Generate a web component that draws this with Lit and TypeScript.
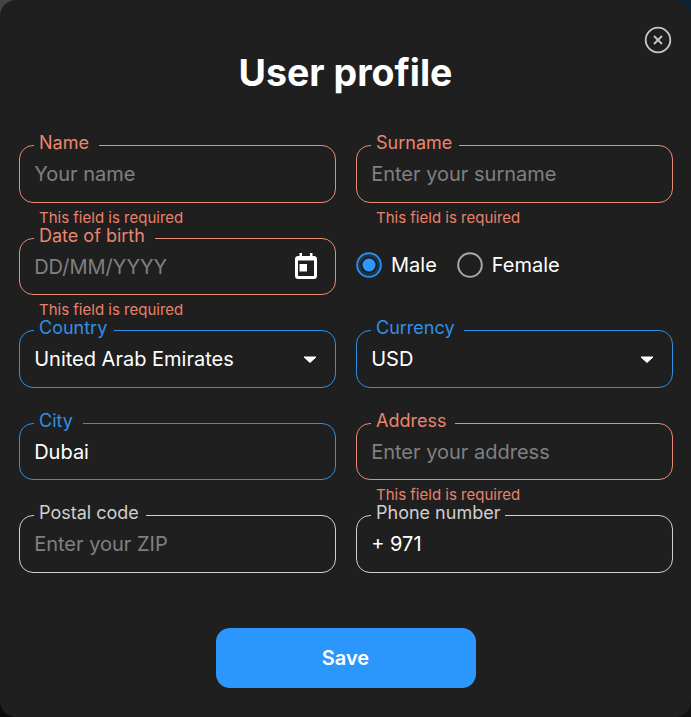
import { LitElement, html, css, nothing } from "lit";
import { customElement, property } from "lit/decorators.js";

@customElement("form-field")
class FormField extends LitElement {
  @property() label = "";
  @property() value = "";
  @property() placeholder = "";
  @property() state: "error" | "focus" | "plain" = "plain";
  @property() error = "";
  @property({ type: Number }) notch = 7;
  @property({ type: Boolean }) select = false;
  @property({ type: Boolean }) date = false;
  static styles = css`
    :host { display: block; font-family: Inter, sans-serif; }
    .box { position: relative; height: 55.5px; border: 1px solid #cfcfcf; border-radius: 14px; display: flex; align-items: center; padding: 0 13px 0 14.2px; }
    .label { position: absolute; left: 14px; top: -15px; padding-left: 5px; background: linear-gradient(transparent 0 12px, #1f1f1f 12px); font-size: 18px; line-height: 24px; color: #cfcfcf; white-space: nowrap; }
    .val { flex: 1; padding-top: 1px; font-size: 20px; color: #fff; white-space: nowrap; }
    .ph { color: #808080; }
    .error .box { border-color: #e98b76; }
    .error .label { color: #ea8670; }
    .focus .box { border-color: #318fe6; }
    .focus .label { color: #318fe6; }
    .msg { height: 20px; padding: 6px 0 0 20px; font-size: 15px; line-height: 17px; color: #e9826c; }
    svg { display: block; }
    .cal { margin-right: 4px; }
  `;
  render() {
    return html`<div class=${this.state}>
      <div class="box">
        <span class="label" style="padding-right:${this.notch}px">${this.label}</span>
        <span class="val ${this.value ? "" : "ph"}">${this.value || this.placeholder}</span>
        ${this.select ? html`<svg width="24" height="24" viewBox="0 0 24 24" fill="#fff" stroke="#fff" stroke-width="1" stroke-linejoin="round"><path d="M6 10h12l-6 5.500z"/></svg>` : nothing}
        ${this.date ? html`<svg class="cal" width="24" height="28" viewBox="0 0 24 28" fill="#fff" fill-rule="evenodd"><path d="M5.500 1h2.500v3h8V1h2.500v3H20c1.700 0 3 1.300 3 3v17c0 1.700-1.300 3-3 3H4c-1.700 0-3-1.300-3-3V7c0-1.700 1.300-3 3-3h1.500zM4 8.500v15.500h16V8.500zM5.500 12H13v7.500H5.500z"/></svg>` : nothing}
      </div>
      ${this.error ? html`<div class="msg">${this.error}</div>` : nothing}
    </div>`;
  }
}

@customElement("app-root")
class AppRoot extends LitElement {
  static styles = css`
    :host { display: block; width: 691px; height: 717px; font-family: Inter, sans-serif; color: #fff; background: conic-gradient(#0d2436 0 25%, #121212 25% 50%, #0b0b0b 50% 75%, #444 75%); }
    .modal { position: relative; height: 717px; background: #1f1f1f; border-radius: 16px; overflow: hidden; }
    .close { position: absolute; right: 19px; top: 26px; }
    h1 { margin: 0; padding-top: 51px; height: 95px; box-sizing: border-box; text-align: center; font-size: 37.5px; line-height: 44px; font-weight: 700; }
    .grid { display: grid; grid-template-columns: 317px 317px; column-gap: 20px; padding: 0 18px 0 19px; margin-top: 50.2px; align-items: start; }
    .row { height: 92.5px; }
    .gender { display: flex; align-items: center; height: 55px; gap: 20px; font-size: 20px; }
    .radio { display: flex; align-items: center; gap: 9px; }
    .actions { display: flex; justify-content: center; margin-top: 20px; }
    button { width: 260px; height: 60px; border: 0; border-radius: 14px; background: #2b96fb; color: #fff; font: 600 20px Inter, sans-serif; }
    svg { display: block; }
  `;
  render() {
    return html`<div class="modal">
      <svg class="close" width="28" height="28" viewBox="0 0 28 28" fill="none" stroke="#c8c8c8" stroke-width="1.800"><circle cx="14" cy="14" r="12.300"/><path d="M10 10l8 8M18 10l-8 8"/></svg>
      <h1>User profile</h1>
      <div class="grid">
        <div class="row"><form-field label="Name" notch="10" placeholder="Your name" state="error" error="This field is required"></form-field></div>
        <div class="row"><form-field label="Surname" notch="7" placeholder="Enter your surname" state="error" error="This field is required"></form-field></div>
        <div class="row"><form-field label="Date of birth" notch="10" placeholder="DD/MM/YYYY" state="error" error="This field is required" date></form-field></div>
        <div class="row"><div class="gender">
          <label class="radio"><svg width="26" height="26" viewBox="0 0 26 26" fill="none"><circle cx="13" cy="13" r="11.800" stroke="#2f8fe6" stroke-width="2"/><circle cx="13" cy="13" r="9.500" stroke="#123a5c" stroke-width="2"/><circle cx="13" cy="13" r="6.500" fill="#2f96fb"/></svg>Male</label>
          <label class="radio"><svg width="26" height="26" viewBox="0 0 26 26" fill="none"><circle cx="13" cy="13" r="11.800" stroke="#a8a8a8" stroke-width="2"/></svg>Female</label>
        </div></div>
        <div class="row"><form-field label="Country" notch="7" value="United Arab Emirates" state="focus" select></form-field></div>
        <div class="row"><form-field label="Currency" notch="9" value="USD" state="focus" select></form-field></div>
        <div class="row"><form-field label="City" notch="10" value="Dubai" state="focus"></form-field></div>
        <div class="row"><form-field label="Address" notch="9" placeholder="Enter your address" state="error" error="This field is required"></form-field></div>
        <div class="row"><form-field label="Postal code" notch="7" placeholder="Enter your ZIP"></form-field></div>
        <div class="row"><form-field label="Phone number" notch="5" value="+ 971"></form-field></div>
      </div>
      <div class="actions"><button>Save</button></div>
    </div>`;
  }
}
